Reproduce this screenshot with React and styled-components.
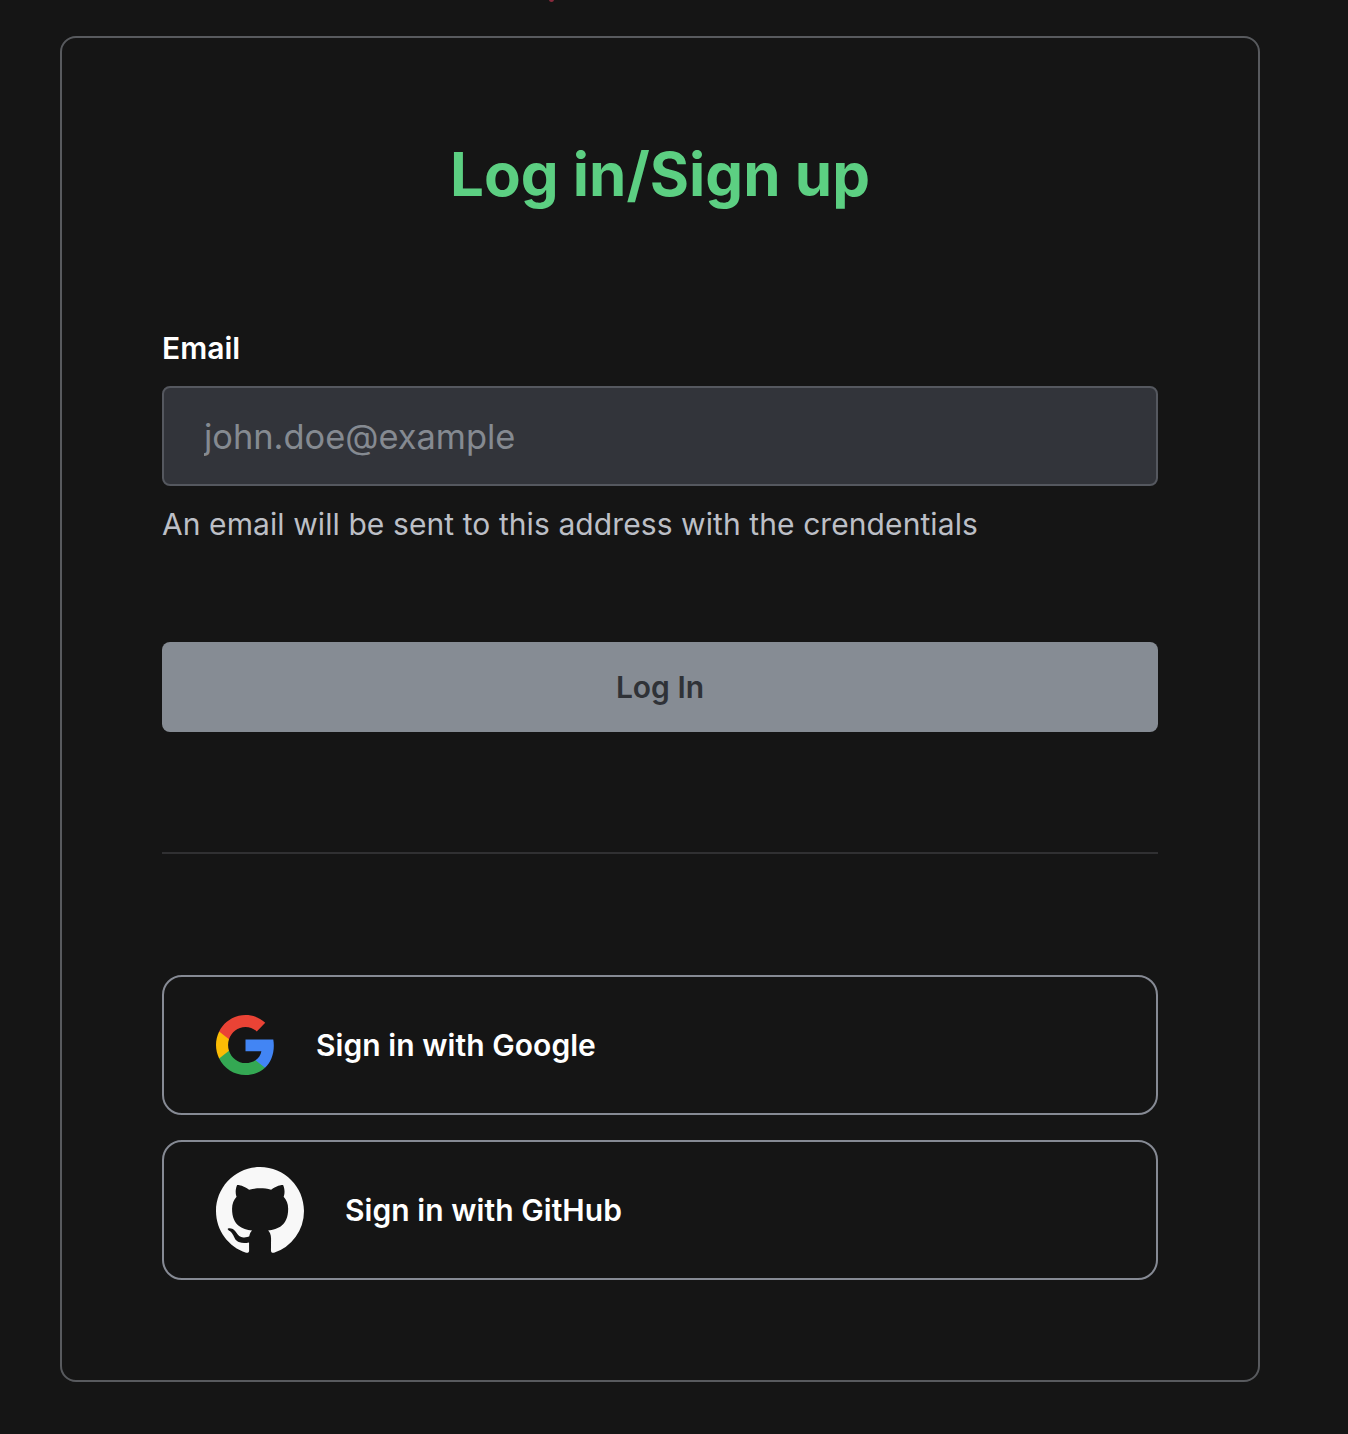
import React from "react";
import styled, { createGlobalStyle } from "styled-components";

const Global = createGlobalStyle`
  html, body { margin: 0; padding: 0; background: #151515; }
  body { font-family: Inter, "Liberation Sans", sans-serif; }
  * { box-sizing: border-box; }
`;

const Page = styled.div`
  position: relative;
  width: 1348px;
  height: 1434px;
  padding: 36px 88px 52px 60px;
  background: #151515;
  overflow: hidden;
`;

const TopMark = styled.span`
  position: absolute;
  top: -3px;
  left: 549px;
  width: 5px;
  height: 5px;
  border-radius: 50%;
  background: #8a2a3c;
`;

const Card = styled.main`
  height: 1346px;
  display: flex;
  flex-direction: column;
  padding: 0 100px;
  border: 2px solid #585a5e;
  border-radius: 16px;
`;

const Title = styled.h1`
  margin: 96px 0 0;
  height: 80px;
  font-size: 60px;
  line-height: 80px;
  font-weight: 700;
  letter-spacing: 0;
  text-align: center;
  color: #5ccf82;
`;

const Label = styled.label`
  margin-top: 116px;
  height: 56px;
  font-size: 30px;
  line-height: 36px;
  font-weight: 600;
  color: #ffffff;
`;

const Input = styled.input`
  display: block;
  width: 100%;
  height: 100px;
  padding: 0 40px;
  border: 2px solid #55585f;
  border-radius: 8px;
  background: #32343a;
  color: #fff;
  font-family: inherit;
  font-size: 34.4px;
  outline: none;
  &::placeholder { color: #858a91; opacity: 1; }
`;

const Help = styled.p`
  margin: 20px 0 0;
  height: 36px;
  font-size: 30px;
  line-height: 36px;
  letter-spacing: 0.085px;
  color: #bcbfc6;
`;

const Submit = styled.button`
  margin-top: 100px;
  height: 90px;
  border: 0;
  border-radius: 8px;
  background: #868c94;
  color: #2f3237;
  font-family: inherit;
  font-size: 30px;
  font-weight: 600;
`;

const Divider = styled.hr`
  width: 100%;
  height: 2px;
  margin: 120px 0 121px;
  border: 0;
  background: #303032;
`;

const Providers = styled.div`
  display: flex;
  flex-direction: column;
  gap: 25px;
`;

const Provider = styled.button`
  display: flex;
  align-items: center;
  gap: 41px;
  height: 140px;
  padding: 0 0 0 52px;
  border: 2px solid #868a94;
  border-radius: 20px;
  background: transparent;
  color: #fff;
  font-family: inherit;
  font-size: 30px;
  font-weight: 600;
  letter-spacing: 0.06px;
`;

const GitHubMark = styled.svg`
  margin-top: 2px;
`;

const Google = () => (
  <svg width="59" height="60" viewBox="0 0 18 18" preserveAspectRatio="none" aria-hidden="true">
    <path fill="#4285F4" d="M17.64 9.2c0-.637-.057-1.251-.164-1.84H9v3.481h4.844c-.209 1.125-.843 2.078-1.796 2.717v2.258h2.908c1.702-1.567 2.684-3.874 2.684-6.615z" />
    <path fill="#34A853" d="M9 18c2.43 0 4.467-.806 5.956-2.18l-2.908-2.259c-.806.54-1.837.86-3.048.86-2.344 0-4.328-1.584-5.036-3.711H.957v2.332C2.438 15.983 5.482 18 9 18z" />
    <path fill="#FBBC05" d="M3.964 10.71c-.18-.54-.282-1.117-.282-1.71s.102-1.17.282-1.71V4.958H.957C.347 6.173 0 7.548 0 9s.348 2.827.957 4.042l3.007-2.332z" />
    <path fill="#EA4335" d="M9 3.58c1.321 0 2.508.454 3.44 1.345l2.582-2.58C13.463.891 11.426 0 9 0 5.482 0 2.438 2.017.957 4.958L3.964 7.29C4.672 5.163 6.656 3.58 9 3.58z" />
  </svg>
);

const GitHub = () => (
  <GitHubMark width="88" height="88" viewBox="0 0 16 16" aria-hidden="true">
    <path fill="#f8f8f8" d="M8 0C3.58 0 0 3.58 0 8c0 3.54 2.29 6.53 5.47 7.59.4.07.55-.17.55-.38 0-.19-.01-.82-.01-1.49-2.01.37-2.53-.49-2.69-.94-.09-.23-.48-.94-.82-1.13-.28-.15-.68-.52-.01-.53.63-.01 1.08.58 1.23.82.72 1.21 1.87.87 2.33.66.07-.52.28-.87.51-1.07-1.78-.2-3.64-.89-3.64-3.95 0-.87.31-1.59.82-2.15-.08-.2-.36-1.02.08-2.12 0 0 .67-.21 2.2.82.64-.18 1.32-.27 2-.27.68 0 1.36.09 2 .27 1.53-1.04 2.2-.82 2.2-.82.44 1.1.16 1.92.08 2.12.51.56.82 1.27.82 2.15 0 3.07-1.87 3.75-3.65 3.95.29.25.54.73.54 1.48 0 1.07-.01 1.93-.01 2.2 0 .21.15.46.55.38A8.013 8.013 0 0016 8c0-4.42-3.58-8-8-8z" />
  </GitHubMark>
);

export default function App() {
  return (
    <Page>
      <Global />
      <TopMark />
      <Card>
        <Title>Log in/Sign up</Title>
        <Label htmlFor="email">Email</Label>
        <Input id="email" placeholder="john.doe@example" />
        <Help>An email will be sent to this address with the crendentials</Help>
        <Submit>Log In</Submit>
        <Divider />
        <Providers>
          <Provider><Google />Sign in with Google</Provider>
          <Provider><GitHub />Sign in with GitHub</Provider>
        </Providers>
      </Card>
    </Page>
  );
}
